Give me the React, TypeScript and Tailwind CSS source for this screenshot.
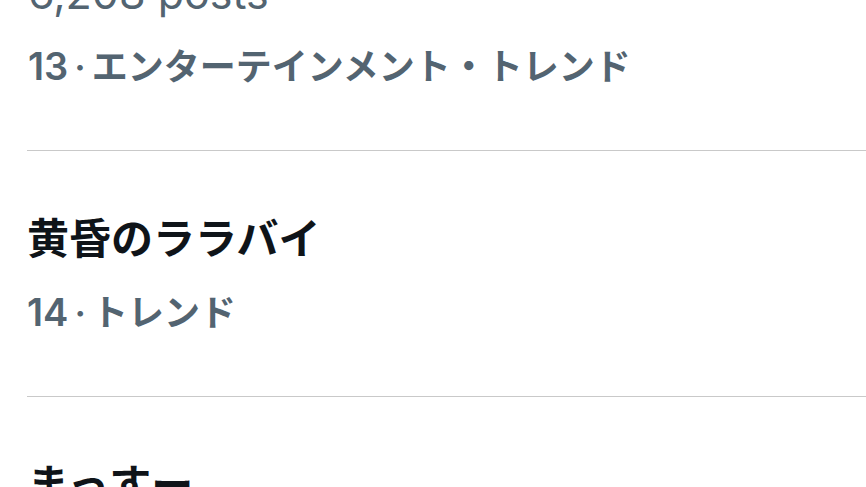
import React from 'react';

type Trend = {
  rank: number;
  title: string;
  category?: string;
};

const trends: Trend[] = [
  { rank: 14, title: '黄昏のララバイ' },
  { rank: 15, title: 'まっすー' },
];

const font = { fontFamily: 'Inter, "Noto Sans CJK JP", sans-serif' };

const RankLine: React.FC<{ rank: number; category?: string }> = ({ rank, category }) => (
  <div className="h-[46px] text-[36px] leading-[46px] font-semibold text-[#536471] whitespace-nowrap">
    <span className="text-[38px]">{rank}</span>
    <span className="mx-[6px]">·</span>
    {category ? `${category}・トレンド` : 'トレンド'}
  </div>
);

const TrendItem: React.FC<{ trend: Trend }> = ({ trend }) => (
  <div className="ml-[27px] border-t border-[#c9c9c9] pt-[62px] pb-[61px]">
    <div className="h-[52px] text-[42px] leading-[52px] font-bold text-[#0f1419] whitespace-nowrap">
      {trend.title}
    </div>
    <div className="mt-[24px]">
      <RankLine rank={trend.rank} category={trend.category} />
    </div>
  </div>
);

export default function App() {
  return (
    <div className="w-[866px] h-[487px] overflow-hidden bg-white" style={font}>
      <div className="-mt-[31px] pl-[28px] pb-[61px]">
        <div className="h-[48px] text-[43px] leading-[48px] text-[#536471] whitespace-nowrap">
          6,208 posts
        </div>
        <div className="mt-[26px]">
          <RankLine rank={13} category="エンターテインメント" />
        </div>
      </div>
      {trends.map((t) => (
        <TrendItem key={t.rank} trend={t} />
      ))}
    </div>
  );
}
